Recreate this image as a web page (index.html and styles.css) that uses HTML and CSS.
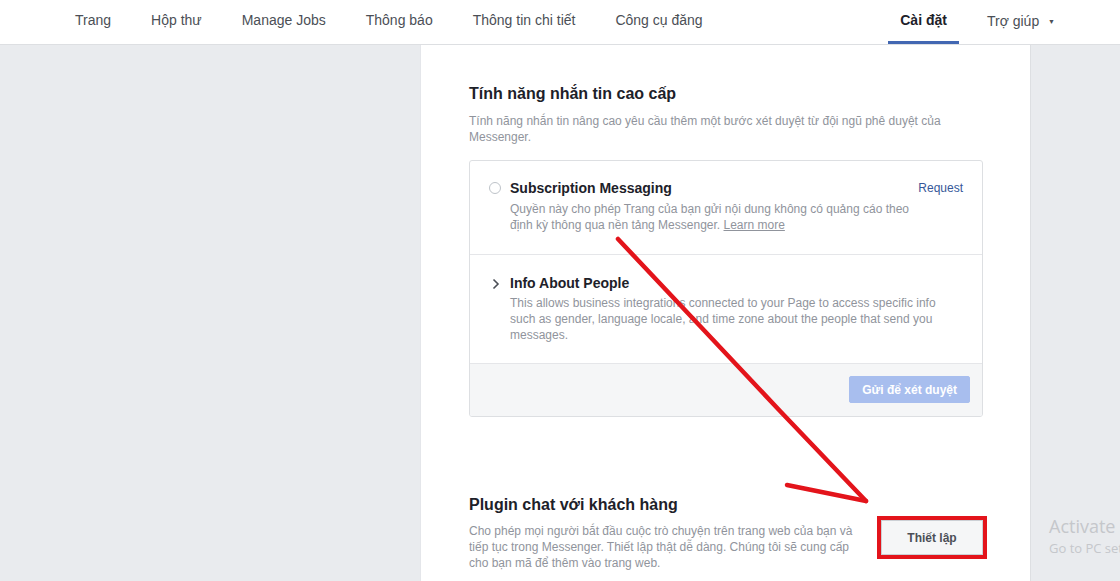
FILE: index.html
```html
<!DOCTYPE html>
<html lang="vi">
<head>
<meta charset="utf-8">
<title>Cài đặt</title>
<link rel="stylesheet" href="styles.css">
</head>
<body>
<header class="topbar">
  <nav class="tabs tabs-left">
    <a class="tab">Trang</a>
    <a class="tab">Hộp thư</a>
    <a class="tab">Manage Jobs</a>
    <a class="tab">Thông báo</a>
    <a class="tab">Thông tin chi tiết</a>
    <a class="tab">Công cụ đăng</a>
  </nav>
  <nav class="tabs tabs-right">
    <a class="tab tab-active">Cài đặt</a>
    <a class="tab tab-help">Trợ giúp <span class="caret">▼</span></a>
  </nav>
</header>

<main class="main">
  <section class="panel">
    <div class="section section-advanced">
      <h2 class="section-title">Tính năng nhắn tin cao cấp</h2>
      <p class="section-desc">Tính năng nhắn tin nâng cao yêu cầu thêm một bước xét duyệt từ đội ngũ phê duyệt của Messenger.</p>

      <div class="perm-box">
        <div class="perm-row">
          <span class="radio"></span>
          <div class="perm-body">
            <div class="perm-title">Subscription Messaging</div>
            <div class="perm-desc">Quyền này cho phép Trang của bạn gửi nội dung không có quảng cáo theo định kỳ thông qua nền tảng Messenger. <a class="link-more">Learn more</a></div>
          </div>
          <a class="perm-request">Request</a>
        </div>
        <div class="perm-row perm-row-divided">
          <svg class="chevron" width="8" height="12" viewBox="0 0 8 12"><path d="M1.5 1.5 L6 6 L1.5 10.5" fill="none" stroke="#4b4f56" stroke-width="1.6"/></svg>
          <div class="perm-body">
            <div class="perm-title">Info About People</div>
            <div class="perm-desc">This allows business integrations connected to your Page to access specific info such as gender, language locale, and time zone about the people that send you messages.</div>
          </div>
        </div>
        <div class="perm-footer">
          <button class="btn-submit" disabled>Gửi để xét duyệt</button>
        </div>
      </div>
    </div>

    <div class="section section-plugin">
      <div class="plugin-text">
        <h2 class="section-title">Plugin chat với khách hàng</h2>
        <p class="plugin-desc">Cho phép mọi người bắt đầu cuộc trò chuyện trên trang web của bạn và tiếp tục trong Messenger. Thiết lập thật dễ dàng. Chúng tôi sẽ cung cấp cho bạn mã để thêm vào trang web.</p>
      </div>
      <button class="btn-setup">Thiết lập</button>
    </div>
  </section>
</main>

<svg class="annotation" width="1120" height="581" viewBox="0 0 1120 581">
  <path d="M618 239 L700 326 L780 411 L866 501" fill="none" stroke="#e3141b" stroke-width="4.5" stroke-linecap="round" stroke-linejoin="round"/>
  <path d="M787 485 L866 501" fill="none" stroke="#e3141b" stroke-width="4.5" stroke-linecap="round"/>
</svg>

<div class="watermark">
  <div class="wm-title">Activate Windows</div>
  <div class="wm-sub">Go to PC settings to activate Windows.</div>
</div>
</body>
</html>
```

FILE: styles.css
```css
* { box-sizing: border-box; }

html, body {
  margin: 0;
  padding: 0;
  height: 100%;
}

body {
  background: #e9ebee;
  font-family: "Liberation Sans", Arial, Helvetica, sans-serif;
  color: #1d2129;
  overflow: hidden;
  position: relative;
}

/* ---------- top bar ---------- */
.topbar {
  display: flex;
  height: 45px;
  background: #fff;
  border-bottom: 1px solid #dddfe2;
}

.tabs {
  display: flex;
}

.tabs-left {
  padding-left: 75px;
  gap: 40px;
}

.tabs-right {
  margin-left: auto;
  padding-right: 65px;
  gap: 28px;
}

.tab {
  display: block;
  height: 44px;
  padding-top: 12px;
  font-size: 14px;
  line-height: 16px;
  color: #4b4f56;
  white-space: nowrap;
  cursor: pointer;
}

.tab-active {
  padding-left: 12px;
  padding-right: 12px;
  font-weight: bold;
  color: #1d2129;
  border-bottom: 3px solid #4267b2;
}

.tab-help {
  padding-top: 13px;
}

.caret {
  display: inline-block;
  margin-left: 5px;
  font-size: 7px;
  vertical-align: 2px;
  color: #4b4f56;
}

/* ---------- main ---------- */
.main {
  display: flex;
  padding-left: 420px;
  height: calc(100% - 45px);
}

.panel {
  width: 611px;
  background: #fff;
  border-left: 1px solid #e4e6ea;
  border-right: 1px solid #dddfe2;
  padding: 39px 47px 0 48px;
}

.section-title {
  margin: 0;
  font-size: 16px;
  line-height: 20px;
  font-weight: bold;
  color: #1d2129;
}

.section-desc {
  margin: 9px 0 0;
  max-width: 480px;
  font-size: 12px;
  line-height: 16px;
  color: #90949c;
}

/* ---------- permission box ---------- */
.perm-box {
  margin-top: 15px;
  border: 1px solid #dddfe2;
  border-radius: 3px;
  overflow: hidden;
}

.perm-row {
  display: flex;
  align-items: flex-start;
  padding: 18px 19px 21px 19px;
}

.perm-row-divided {
  border-top: 1px solid #e5e6e9;
  padding-top: 19px;
  padding-bottom: 20px;
}

.perm-row-divided .perm-desc {
  margin-top: 3px;
}

.radio {
  flex: none;
  width: 12px;
  height: 12px;
  margin-top: 3px;
  margin-right: 9px;
  border: 1px solid #bec3c9;
  border-radius: 50%;
  background: #fff;
}

.chevron {
  flex: none;
  margin-top: 4px;
  margin-left: 3px;
  margin-right: 10px;
}

.perm-body {
  flex: 1;
  min-width: 0;
}

.perm-title {
  font-size: 14px;
  line-height: 18px;
  font-weight: bold;
  color: #1d2129;
}

.perm-desc {
  margin-top: 4px;
  font-size: 12px;
  line-height: 16px;
  color: #90949c;
}

.link-more {
  color: #90949c;
  text-decoration: underline;
  cursor: pointer;
}

.perm-request {
  flex: none;
  margin-left: 6px;
  margin-top: 1px;
  font-size: 12px;
  line-height: 16px;
  color: #365899;
  cursor: pointer;
}

.perm-footer {
  display: flex;
  justify-content: flex-end;
  padding: 12px 12px 13px;
  background: #f5f6f7;
  border-top: 1px solid #e5e6e9;
}

.btn-submit {
  height: 27px;
  padding: 0 12px;
  border: 1px solid #a8beee;
  border-radius: 2px;
  background: #a8beee;
  color: #fff;
  font-family: inherit;
  font-size: 12px;
  font-weight: bold;
}

/* ---------- plugin section ---------- */
.section-plugin {
  display: flex;
  align-items: flex-start;
  margin-top: 78px;
}

.plugin-text {
  flex: 1;
  min-width: 0;
}

.plugin-desc {
  margin: 8px 0 0;
  font-size: 12px;
  line-height: 16px;
  color: #90949c;
}

.btn-setup {
  flex: none;
  width: 102px;
  height: 35px;
  margin-top: 25px;
  margin-left: 19px;
  border: 1px solid #ccd0d5;
  border-radius: 0;
  background: #f5f6f7;
  color: #4b4f56;
  font-family: inherit;
  font-size: 12px;
  font-weight: bold;
  outline: 4px solid #e3141b;
  outline-offset: 0;
  cursor: pointer;
}

/* ---------- overlays ---------- */
.annotation {
  position: absolute;
  left: 0;
  top: 0;
  pointer-events: none;
}

.watermark {
  position: absolute;
  left: 1049px;
  top: 514px;
  white-space: nowrap;
  font-family: "Open Sans", "Noto Sans", sans-serif;
  color: #c5c7cb;
  pointer-events: none;
}

.wm-title {
  font-size: 18px;
  line-height: 24px;
}

.wm-sub {
  font-size: 13px;
  line-height: 20px;
}
```
